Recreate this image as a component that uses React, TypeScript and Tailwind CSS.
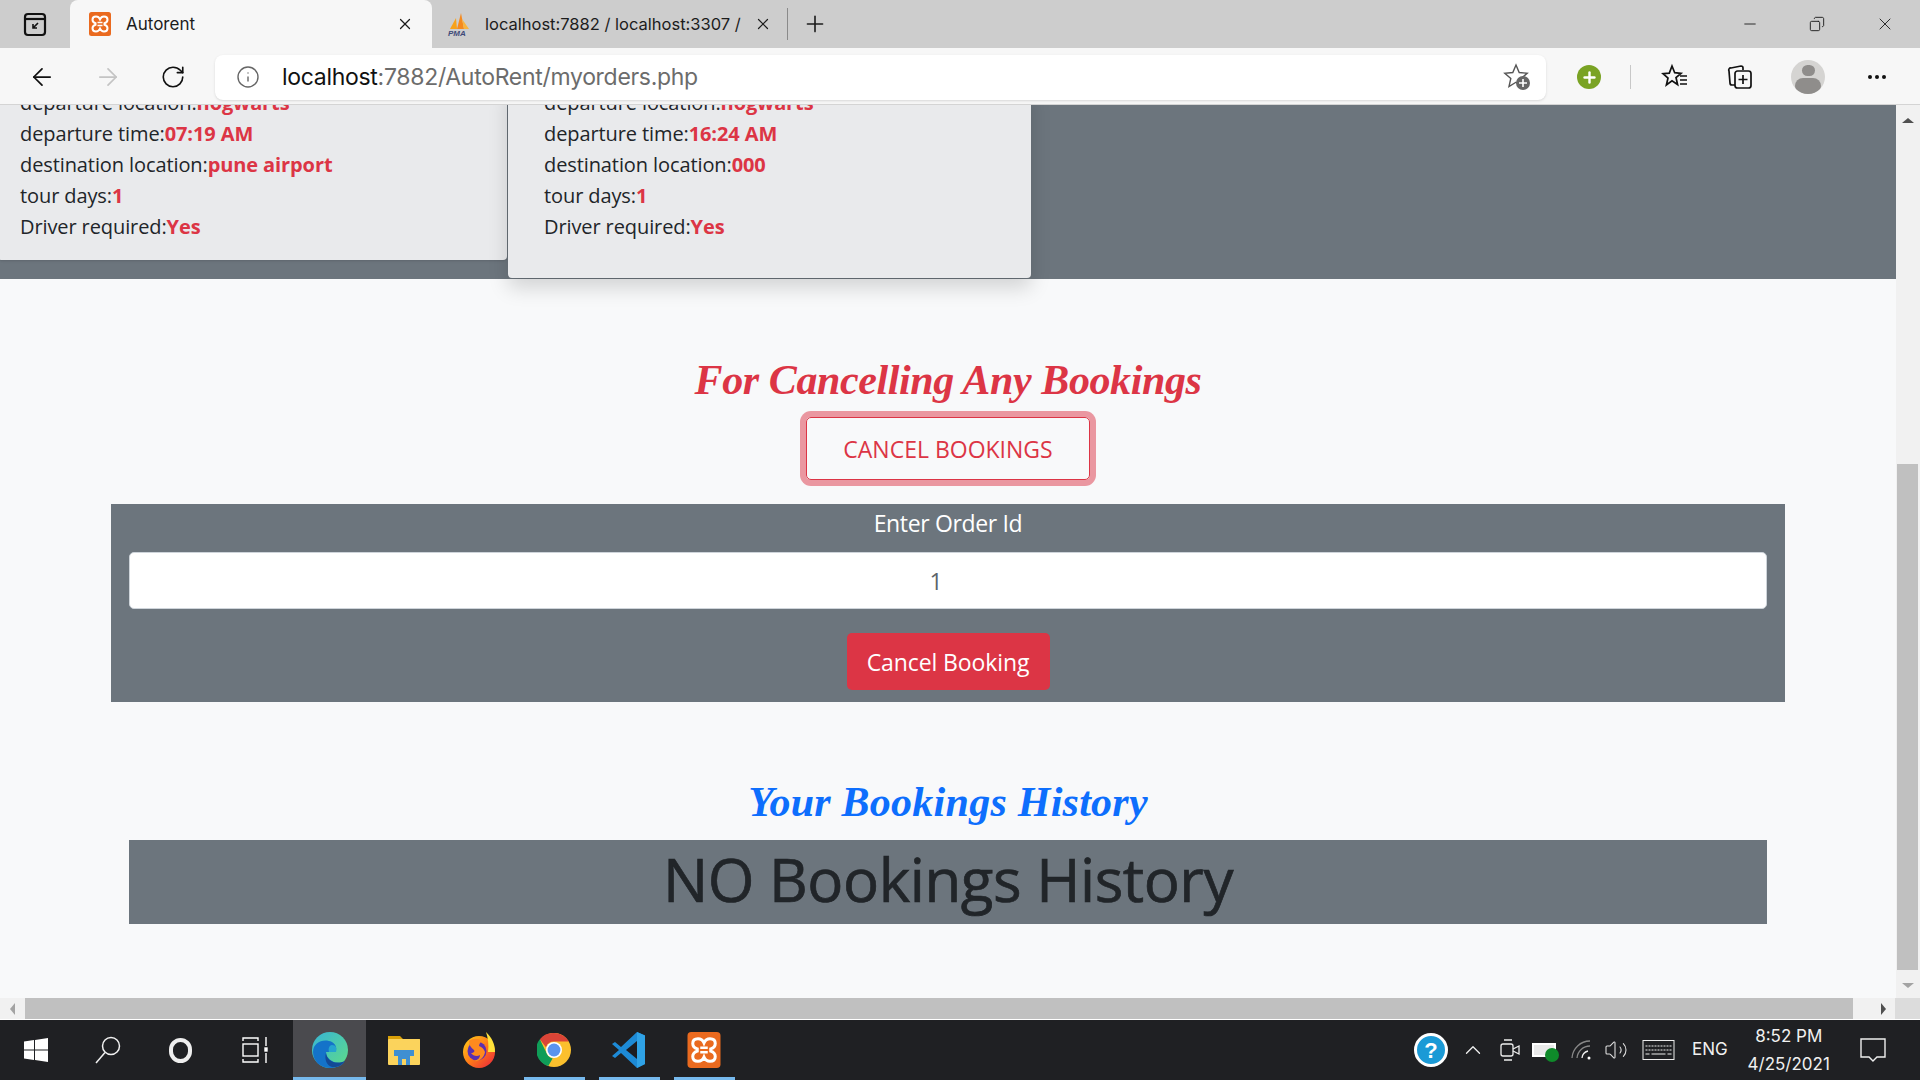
import { ArrowLeft, ArrowRight, ChevronUp, Copy, Info, Minus, Plus, RotateCw, Volume2, X } from "lucide-react";

// xampp logo, used in the tab and in the taskbar
function XamppLogo({ className }: { className: string }) {
  return (
    <svg viewBox="0 0 24 24" className={className}>
      <rect x="1" y="0" width="22" height="24" rx="2.5" fill="#ea6a1f" />
      <path
        d="M8 4.5c-2.5 0-3.5 1.500-3.500 3.200 0 1.800 1.200 3 3 3.600v1.400c-1.800.6-3 1.800-3 3.600 0 1.700 1 3.200 3.500 3.200 2 0 3.200-1 4-2.800.8 1.800 2 2.800 4 2.800 2.500 0 3.500-1.500 3.500-3.200 0-1.800-1.200-3-3-3.600v-1.400c1.800-.6 3-1.800 3-3.600 0-1.700-1-3.200-3.500-3.200-2 0-3.200 1-4 2.800-.8-1.800-2-2.800-4-2.800z"
        fill="none"
        stroke="#fff"
        strokeWidth="2"
      />
      <path d="M9.500 10.500h5M9.500 13.500h5" stroke="#fff" strokeWidth="1.6" />
    </svg>
  );
}

function PmaLogo() {
  return (
    <svg viewBox="0 0 24 24" className="w-[24px] h-[26px]">
      <path d="M3 17 L9 6 L10 17z" fill="#f7a21b" />
      <path d="M10 17 L14 1 L17 17z" fill="#f58a1f" />
      <path d="M17 17 L15 7 L22 17z" fill="#f9b53f" />
      <text x="1" y="24" fontSize="8" fontWeight="700" fontStyle="italic" fill="#3e4a78" fontFamily="Liberation Sans, sans-serif">
        PMA
      </text>
    </svg>
  );
}

function EdgeLogo() {
  return (
    <svg viewBox="0 0 36 36" className="w-[36px] h-[36px]">
      <defs>
        <linearGradient id="edgeTop" x1="0" y1="0" x2="1" y2="1">
          <stop offset="0" stopColor="#37b5d6" />
          <stop offset="1" stopColor="#5fdc87" />
        </linearGradient>
      </defs>
      <circle cx="18" cy="18" r="18" fill="url(#edgeTop)" />
      <path d="M1 20C1 10 12 6 20 10c5 3 5 8 3 10H14c0 6 6 11 14 11 2 0 4-1 5-2-3 5-9 7-15 7C8 36 1 29 1 20z" fill="#1473c9" />
      <path d="M14 21c1 8 9 12 19 8-4 5-9 7-13 6-5-1-8-8-6-14z" fill="#134a96" />
      <path d="M20 13c4 0 5 3 4 7h-7c-1-3 0-7 3-7z" fill="#25a4cf" />
    </svg>
  );
}

function FolderLogo() {
  return (
    <svg viewBox="0 0 32 32" className="w-[32px] h-[32px]">
      <path d="M0 2h12l3 3h17v4H0z" fill="#d9a008" />
      <rect x="0" y="5" width="32" height="26" rx="1" fill="#fbd35c" />
      <path d="M6 16h20v6h-4v9h-4v-6h-4v6h-4v-9H6z" fill="#3f8fd2" />
    </svg>
  );
}

function FirefoxLogo() {
  return (
    <svg viewBox="0 0 34 36" className="w-[34px] h-[36px]">
      <defs>
        <linearGradient id="ffBody" x1="0" y1="0" x2="1" y2="1">
          <stop offset="0" stopColor="#ffd31a" />
          <stop offset="0.5" stopColor="#ff7a18" />
          <stop offset="1" stopColor="#e9203f" />
        </linearGradient>
      </defs>
      <ellipse cx="17" cy="20" rx="16" ry="16" fill="url(#ffBody)" />
      <path d="M24 0c6 6 9 12 9 20h-7c1-7 0-14-2-20z" fill="#ffe23a" />
      <circle cx="15" cy="19" r="9.5" fill="#5b2fb0" />
      <path d="M7 9c4-3 9-3 13 0-2 2-3 3-3 5 3 1 5 3 6 6-1 6-6 10-11 9 4-1 6-3 6-6-3 2-7 1-9-2 3 0 4-2 3-3-3-2-5-5-5-9z" fill="#ff8a1e" />
    </svg>
  );
}

function ChromeLogo() {
  return (
    <svg viewBox="0 0 36 36" className="w-[34px] h-[36px]">
      <circle cx="18" cy="18" r="18" fill="#fbc02d" />
      <path d="M18 0a18 18 0 0 1 15.6 9H18a9 9 0 0 0-8.5 6L3 6.5A18 18 0 0 1 18 0z" fill="#db4437" />
      <path d="M3 6.5 10.5 22a9 9 0 0 0 6 5L12 35A18 18 0 0 1 3 6.5z" fill="#0f9d58" />
      <circle cx="18" cy="18" r="8.5" fill="#fff" />
      <circle cx="18" cy="18" r="6.8" fill="#5b94ee" />
    </svg>
  );
}

function VsCodeLogo() {
  return (
    <svg viewBox="0 0 36 36" className="w-[36px] h-[36px]">
      <path d="M26 0 34 3.5V32l-8 4L10 21l-6 5-3-2 7-6-7-6 3-2 6 5z" fill="#1d8ad6" />
      <path d="M26 0 34 3.5V32l-8 4z" fill="#2fa2e6" />
      <path d="M26 9 15 18l11 9z" fill="#1c1c22" />
    </svg>
  );
}

function WindowsLogo() {
  return (
    <svg viewBox="0 0 24 24" className="w-[24px] h-[24px]" fill="#fff">
      <path d="M0 3.4 10 2v9.5H0zM11 1.900 24 0v11.500H11zM0 12.500h10V22L0 20.600zM11 12.500h13V24l-13-1.900z" />
    </svg>
  );
}

function Line({ label, value }: { label: string; value: string }) {
  return (
    <p className="h-[31px] leading-[31px]">
      {label}:<span className="font-bold text-[#dc3545]">{value}</span>
    </p>
  );
}

function OrderCard({ time, dest, className }: { time: string; dest: string; className: string }) {
  return (
    <div className={className}>
      <Line label="departure location" value="hogwarts" />
      <Line label="departure time" value={time} />
      <Line label="destination location" value={dest} />
      <Line label="tour days" value="1" />
      <Line label="Driver required" value="Yes" />
    </div>
  );
}

function TaskItem({ underline, className, children }: { underline?: string; className: string; children: React.ReactNode }) {
  return (
    <div className={`relative h-[60px] flex items-center justify-center ${className}`}>
      {children}
      {underline && <span className={`absolute bottom-0 h-[3px] bg-[#76b9ed] ${underline}`} />}
    </div>
  );
}

export default function App() {
  return (
    <div className="w-[1920px] h-[1080px] flex flex-col overflow-hidden bg-[#f8f9fa] text-[#212529] font-['Open_Sans',sans-serif] text-[20px] tracking-[-0.1px]">
      {/* TAB STRIP */}
      <div className="h-12 shrink-0 flex items-center bg-[#cdcdcd] text-[#1c1c1c] tracking-normal">
        <div className="w-[70px] flex justify-center">
          <svg viewBox="0 0 24 24" className="w-[24px] h-[26px]" fill="none" stroke="#111" strokeWidth="2.2">
            <rect x="2" y="2" width="20" height="21" rx="3" />
            <path d="M3 7h18" />
            <path d="M15 11l-5 5m0-4v4h4" strokeWidth="1.6" />
          </svg>
        </div>
        <div className="w-[362px] h-12 flex items-center rounded-t-lg bg-[#f7f7f7] pl-[18px] pr-[18px]">
          <XamppLogo className="w-[24px] h-[24px]" />
          <span className="ml-[14px] mt-[1px] text-[17px] font-['Inter',sans-serif]">Autorent</span>
          <X className="ml-auto w-[18px] h-[18px]" strokeWidth={1.6} />
        </div>
        <div className="flex items-center w-[356px] h-[32px] pl-[15px] pr-[15px] border-r border-[#8a8a8a]">
          <PmaLogo />
          <span className="ml-[14px] w-[256px] whitespace-nowrap overflow-hidden text-[16.500px] font-['Inter',sans-serif]">localhost:7882 / localhost:3307 /</span>
          <X className="ml-auto w-[18px] h-[18px]" strokeWidth={1.6} />
        </div>
        <Plus className="ml-[14px] w-[26px] h-[26px]" strokeWidth={1.5} />
        <div className="ml-auto flex items-center">
          <Minus className="w-[18px] h-[18px] mr-[50px]" strokeWidth={1.2} />
          <Copy className="w-[16px] h-[18px] mr-[50px] -scale-x-100" strokeWidth={1.4} />
          <X className="w-[20px] h-[20px] mr-[25px]" strokeWidth={1.1} />
        </div>
      </div>

      {/* TOOLBAR */}
      <div className="h-[57px] shrink-0 flex items-center pt-[2px] bg-[#f7f7f7] border-b border-[#d4d4d4] tracking-normal">
        <ArrowLeft className="ml-[28px] w-[28px] h-[28px] text-[#111]" strokeWidth={1.5} />
        <ArrowRight className="ml-[38px] w-[28px] h-[28px] text-[#c4c4c4]" strokeWidth={1.5} />
        <RotateCw className="ml-[38px] w-[26px] h-[26px] text-[#111]" strokeWidth={1.5} />
        <div className="ml-[29px] w-[1331px] h-[45px] flex items-center rounded-lg bg-white shadow-sm">
          <Info className="ml-[21px] w-[24px] h-[24px] text-[#666]" strokeWidth={1.4} />
          <span className="ml-[22px] mt-[1px] text-[23px] font-['Inter',sans-serif] tracking-[-0.3px] text-[#111]">
            localhost<span className="text-[#6c6c6c]">:7882/AutoRent/myorders.php</span>
          </span>
          <svg viewBox="0 0 28 28" className="ml-auto mr-[15px] w-[28px] h-[28px]">
            <path d="M13 2l3.200 7.500 8 .7-6 5.300 1.800 8-7-4.300L6 23.500l1.800-8-6-5.300 8-.7z" fill="none" stroke="#555" strokeWidth="1.4" />
            <circle cx="20" cy="20" r="7" fill="#666" />
            <path d="M20 16v8M16 20h8" stroke="#fff" strokeWidth="1.6" />
          </svg>
        </div>
        <div className="ml-[31px] w-[24px] h-[24px] rounded-full bg-[#7aa324] flex items-center justify-center">
          <Plus className="w-[17px] h-[17px] text-white" strokeWidth={3.4} />
        </div>
        <div className="ml-[29px] w-px h-[24px] bg-[#c8c8c8]" />
        <svg viewBox="0 0 28 28" className="ml-[30px] w-[28px] h-[28px]" fill="none" stroke="#111" strokeWidth="1.7">
          <path d="M11 3l2.700 6.700 6.300.6-5 4.200 1.600 7-5.600-3.700L5.400 22l1.600-7-5-4.300 6.300-.6z" />
          <path d="M19 13h7M19 17h7M19 21h7" />
        </svg>
        <svg viewBox="0 0 28 28" className="ml-[37px] w-[28px] h-[28px]" fill="none" stroke="#111" strokeWidth="1.7">
          <path d="M9 22H6a2 2 0 0 1-2-2l-1-12a2 2 0 0 1 2-3l10-2a2 2 0 0 1 2 2v2" />
          <rect x="9" y="8" width="16" height="17" rx="2.500" />
          <path d="M17 12v9M12.500 16.500h9" />
        </svg>
        <div className="ml-[37px] w-[34px] h-[34px] rounded-full bg-[#d5d4d2] overflow-hidden flex flex-col items-center">
          <div className="mt-[5px] w-[13px] h-[13px] rounded-full bg-[#8f8d8b]" />
          <div className="mt-[2px] w-[26px] h-[20px] rounded-full bg-[#8f8d8b]" />
        </div>
        <div className="ml-[43px] flex gap-[3px]">
          <span className="w-[4px] h-[4px] rounded-full bg-[#111]" />
          <span className="w-[4px] h-[4px] rounded-full bg-[#111]" />
          <span className="w-[4px] h-[4px] rounded-full bg-[#111]" />
        </div>
      </div>

      {/* PAGE + VERTICAL SCROLLBAR */}
      <div className="h-[893px] shrink-0 flex">
        <div className="w-[1896px] overflow-hidden">
          <div className="h-[174px] bg-[#6c757d] flex items-start">
            <OrderCard
              time="07:19 AM"
              dest="pune airport"
              className="w-[509px] -ml-[2px] -mt-[18px] pl-[22px] pb-[18px] bg-[#e9eaec] rounded-b shadow"
            />
            <OrderCard
              time="16:24 AM"
              dest="000"
              className="w-[523px] ml-px -mt-[18px] pl-9 pb-[36px] bg-[#e9eaec] rounded-b shadow-[0_10px_20px_rgba(0,0,0,0.15)]"
            />
          </div>

          <h2 className="mt-[71px] h-[60px] leading-[60px] text-center text-[42px] font-bold italic text-[#dc3545] font-['Liberation_Serif',serif] tracking-[-0.4px]">
            For Cancelling Any Bookings
          </h2>
          <button className="block mx-auto mt-[7px] w-[284px] h-[63px] pt-[2px] rounded-[5px] border border-[#dc3545] text-[23px] tracking-normal text-[#dc3545] ring-[6px] ring-[#dc3545]/50">
            CANCEL BOOKINGS
          </button>

          <div className="ml-[111px] mt-[24px] w-[1674px] h-[198px] bg-[#6c757d] px-[18px] pt-[4px] flex flex-col items-center">
            <label className="h-[30px] leading-[30px] text-[23px] tracking-[-0.35px] text-white">Enter Order Id</label>
            <input
              readOnly
              value="1"
              className="mt-[14px] w-full h-[57px] rounded-[5px] bg-white border border-[#ced4da] text-center text-[23px] text-[#5c646b] pr-[24px]"
            />
            <button className="mt-[24px] w-[203px] h-[57px] pt-[2px] rounded-[5px] bg-[#dc3545] text-[23px] text-white">Cancel Booking</button>
          </div>

          <h2 className="mt-[70px] h-[60px] leading-[60px] text-center text-[42px] font-bold italic text-[#0d6efd] font-['Liberation_Serif',serif] tracking-[0.25px]">
            Your Bookings History
          </h2>
          <div className="ml-[129px] mt-2 w-[1638px] h-[84px] bg-[#6c757d] text-center text-[60px] leading-[79px] tracking-[-0.45px] [-webkit-text-stroke:0.7px_#212529]">
            NO Bookings History
          </div>
        </div>

        <div className="w-6 flex flex-col items-center bg-[#f1f1f1] relative">
          <span className="mt-[13px] w-0 h-0 border-x-[6px] border-x-transparent border-b-[5px] border-b-[#505050]" />
          <div className="absolute top-[359px] left-px w-[21px] h-[506px] bg-[#c0c0c0]" />
          <span className="absolute bottom-[10px] w-0 h-0 border-x-[6px] border-x-transparent border-t-[5px] border-t-[#a3a3a3]" />
        </div>
      </div>

      {/* HORIZONTAL SCROLLBAR */}
      <div className="h-[22px] shrink-0 flex bg-[#f1f1f1] border-b border-white">
        <div className="w-[25px] flex items-center justify-center">
          <span className="w-0 h-0 border-y-[6px] border-y-transparent border-r-[5px] border-r-[#a3a3a3]" />
        </div>
        <div className="w-[1828px] h-[21px] bg-[#c0c0c0]" />
        <div className="w-[42px] flex items-center justify-center pl-[18px]">
          <span className="w-0 h-0 border-y-[6px] border-y-transparent border-l-[5px] border-l-[#505050]" />
        </div>
        <div className="w-[25px] bg-[#dcdcdc]" />
      </div>

      {/* TASKBAR */}
      <div className="h-[60px] shrink-0 flex items-center bg-[#1f2023] text-[#f0f0f0] tracking-normal">
        <div className="w-[72px] flex justify-center"><WindowsLogo /></div>
        <div className="w-[72px] flex justify-center">
          <svg viewBox="0 0 26 28" className="w-[26px] h-[28px]" fill="none" stroke="#f0f0f0" strokeWidth="1.5">
            <circle cx="16" cy="10" r="8.5" />
            <path d="M10 16.500 1 27" />
          </svg>
        </div>
        <div className="w-[72px] flex justify-center">
          <span className="w-[23px] h-[25px] rounded-full border-[4px] border-[#eeeeee]" />
        </div>
        <div className="w-[77px] flex justify-center">
          <svg viewBox="0 0 26 26" className="w-[26px] h-[26px]" fill="none" stroke="#fff" strokeWidth="1.4">
            <path d="M1 4V1h15v3M1 22v3h15v-3" />
            <rect x="1" y="7" width="15" height="12" />
            <path d="M24 0v9M24 16v10" />
            <rect x="23" y="11" width="2" height="3" fill="#fff" />
          </svg>
        </div>
        <TaskItem underline="inset-x-0" className="w-[73px] bg-[#4a4a4e]"><EdgeLogo /></TaskItem>
        <TaskItem className="w-[76px]"><FolderLogo /></TaskItem>
        <TaskItem className="w-[74px]"><FirefoxLogo /></TaskItem>
        <TaskItem underline="left-2 right-[6px]" className="w-[75px]"><ChromeLogo /></TaskItem>
        <TaskItem underline="left-2 right-[6px]" className="w-[75px]"><VsCodeLogo /></TaskItem>
        <TaskItem underline="left-2 right-[6px]" className="w-[75px]"><XamppLogo className="w-[36px] h-[36px]" /></TaskItem>

        <div className="ml-[673px] w-[34px] h-[34px] rounded-full bg-[#1b9ad6] border-[3px] border-white flex items-center justify-center text-white font-bold text-[22px] font-['Liberation_Sans',sans-serif]">
          ?
        </div>
        <ChevronUp className="ml-[12px] w-[26px] h-[26px]" strokeWidth={1.2} />
        <svg viewBox="0 0 24 24" className="ml-[12px] w-[24px] h-[24px]" fill="none" stroke="#eee" strokeWidth="1.3">
          <rect x="3" y="6" width="12" height="12" rx="2" />
          <path d="M15 11l6-3v8l-6-3M6 2h8M6 22h8" />
        </svg>
        <div className="ml-[10px] relative w-[24px] h-[14px] border-2 border-white bg-white/90">
          <span className="absolute -right-[5px] -bottom-[7px] w-[14px] h-[14px] rounded-full bg-[#0f8a2a]" />
        </div>
        <svg viewBox="0 0 24 24" className="ml-[14px] w-[24px] h-[24px]" fill="none" stroke="#888" strokeWidth="1.3">
          <path d="M2 20A18 18 0 0 1 20 3M7 20A13 13 0 0 1 20 8" />
          <path d="M12 20a8 8 0 0 1 6-7" stroke="#eee" />
          <circle cx="19" cy="20" r="1.500" fill="#fff" stroke="none" />
        </svg>
        <Volume2 className="ml-[10px] w-[24px] h-[24px] text-[#ddd]" strokeWidth={1.1} />
        <svg viewBox="0 0 32 20" className="ml-[14px] w-[33px] h-[20px]" fill="none" stroke="#eee" strokeWidth="1">
          <rect x="0.500" y="0.500" width="31" height="19" />
          <path d="M3 6h26M3 10h26" strokeDasharray="2 1" />
          <path d="M3 14h4M9 14h14M25 14h4" />
        </svg>
        <span className="ml-[17px] text-[17px] font-['Inter',sans-serif]">ENG</span>
        <div className="ml-[19px] w-[84px] text-center text-[17px] leading-[28px] font-['Inter',sans-serif] whitespace-nowrap">
          <p>8:52 PM</p>
          <p>4/25/2021</p>
        </div>
        <svg viewBox="0 0 26 26" className="ml-[29px] w-[26px] h-[26px]" fill="none" stroke="#eee" strokeWidth="1.4">
          <path d="M1 2h24v18h-8l-4 4-4-4H1z" />
        </svg>
      </div>
    </div>
  );
}
